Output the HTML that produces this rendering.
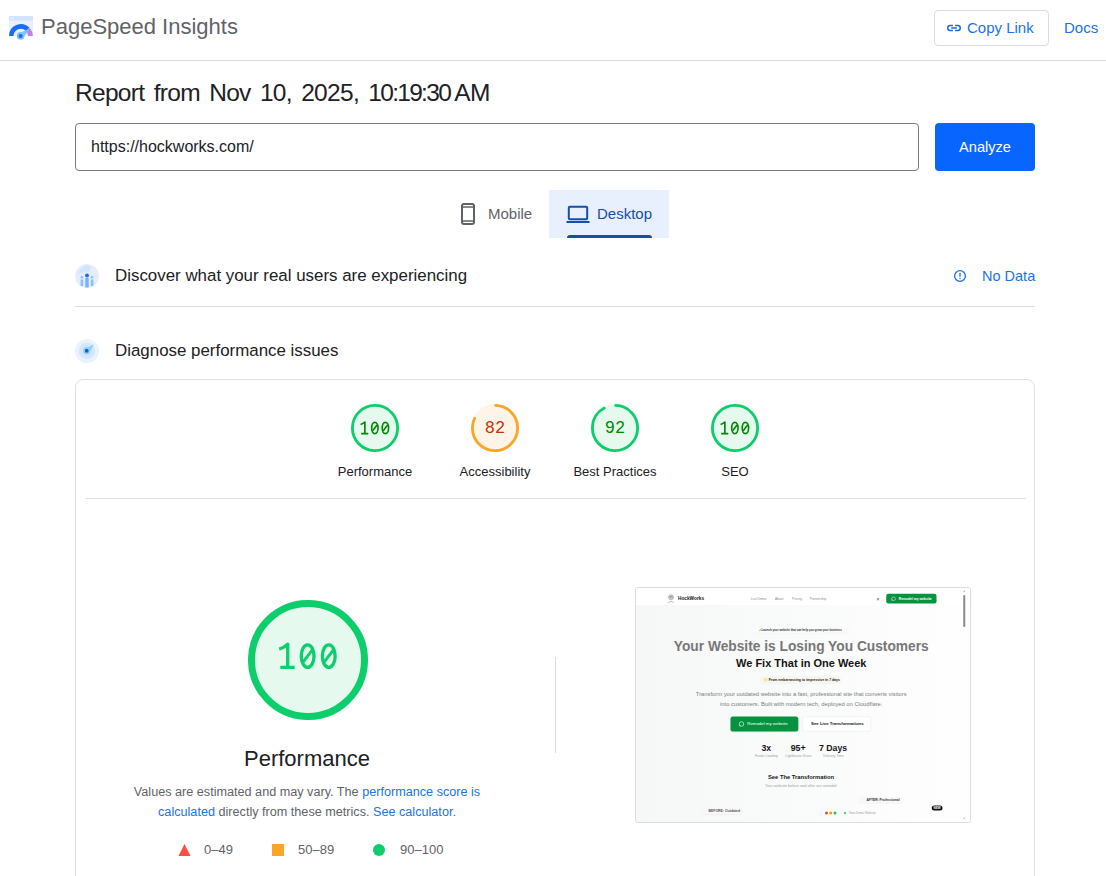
<!DOCTYPE html>
<html><head><meta charset="utf-8">
<style>
*{box-sizing:border-box;margin:0;padding:0}
html,body{width:1106px;height:876px;overflow:hidden;background:#fff;font-family:"Liberation Sans",sans-serif;color:#202124}
.abs{position:absolute}
#hdr{position:absolute;left:0;top:0;width:1106px;height:61px;border-bottom:1px solid #dadce0}
#title{left:41px;top:14px;font-size:22px;color:#5f6368;white-space:nowrap}
#copy{left:934px;top:10px;width:115px;height:36px;border:1px solid #dadce0;border-radius:4px}
#copytxt{left:967px;top:19px;font-size:15px;color:#1a73e8;white-space:nowrap}
#docs{left:1064px;top:19px;font-size:15px;color:#1a73e8}
#report{left:75px;top:79px;font-size:24.5px;letter-spacing:-0.7px;word-spacing:3.2px;color:#202124;white-space:nowrap}
#url{left:75px;top:123px;width:844px;height:48px;border:1px solid #7a7a7a;border-radius:4px}
#urltxt{left:91px;top:138px;font-size:16px;color:#202124;white-space:nowrap}
#analyze{left:935px;top:123px;width:100px;height:48px;background:#0866fe;border-radius:4px;color:#fff;font-size:14.6px;text-align:center;line-height:49px}
#desktop{left:549px;top:190px;width:120px;height:48px;background:#e8f0fe}
.tabtxt{font-size:15px;white-space:nowrap}
#sep1{left:75px;top:306px;width:960px;height:1px;background:#dadce0}
.sect{font-size:16.9px;color:#202124;white-space:nowrap}
#card{left:75px;top:379px;width:960px;height:560px;border:1px solid #e0e0e0;border-radius:8px}
#sep2{left:85px;top:498px;width:941px;height:1px;background:#e0e0e0}
.glabel{font-size:13px;color:#202124;white-space:nowrap;text-align:center;width:160px}
.gnum{font-family:"Liberation Mono",monospace;width:120px;text-align:center;white-space:nowrap;line-height:1;transform:scaleY(1.1);transform-origin:50% 50%}
#vdiv{left:555px;top:657px;width:1px;height:96px;background:#dadce0}
#shot{left:635px;top:587px;width:336px;height:236px;border:1px solid #dadce0;border-radius:3px;overflow:hidden;background:#fff}
.desc{font-size:12.65px;color:#5f6368;white-space:nowrap;line-height:20px}
.lnk{color:#1a73e8}
.leg{font-size:13px;color:#5f6368;white-space:nowrap}
#mini{position:absolute;left:0;top:0;width:1336px;height:936px;background:linear-gradient(90deg,#f6f7f7,#f9fafa 45%,#fdfdfd 80%,#fefefe);transform:scale(0.25);transform-origin:0 0;overflow:hidden}
.m{position:absolute}
.t{white-space:nowrap;line-height:1}
.c{left:0;width:1322px;text-align:center}
</style></head><body>
<div id="hdr"></div>
<!-- logo -->
<svg class="abs" style="left:8px;top:15px" width="26" height="26" viewBox="0 0 26 26">
  <rect x="0.9" y="1" width="24" height="20" rx="1.5" fill="#e8f0fe"/>
  <rect x="0.9" y="1" width="24" height="4.6" rx="1.2" fill="#d2e3fc"/>
  <circle cx="3.2" cy="3.2" r="0.65" fill="#fff"/>
  <circle cx="5.2" cy="3.2" r="0.65" fill="#fff"/>
  <path d="M3.25 21.1 A9.65 9.65 0 0 1 19.72 14.28" fill="none" stroke="#1a6cf0" stroke-width="4.6"/>
  <path d="M19.72 14.28 A9.65 9.65 0 0 1 22.55 21.1" fill="none" stroke="#c47ef0" stroke-width="4.6"/>
  <path d="M10.4 18.6 L21.8 13.4 L14.6 23.2 Z" fill="#7cc2fa"/>
  <circle cx="12.6" cy="20.9" r="3.8" fill="#7cc2fa"/>
  <circle cx="12.6" cy="20.9" r="2" fill="#1a6cf0"/>
</svg>
<div id="title" class="abs">PageSpeed Insights</div>
<div id="copy" class="abs"></div>
<svg class="abs" style="left:944px;top:20px" width="20" height="16" viewBox="944 20 20 16">
  <path d="M952.9 25.5 H950.2 A2.45 2.45 0 0 0 950.2 30.4 H952.9 M955.1 25.5 H957.8 A2.45 2.45 0 0 1 957.8 30.4 H955.1" fill="none" stroke="#1a66d6" stroke-width="1.45"/>
  <path d="M951.2 27.95 H956.8" stroke="#1a66d6" stroke-width="1.5"/>
</svg>
<div id="copytxt" class="abs">Copy Link</div>
<div id="docs" class="abs">Docs</div>

<div id="report" class="abs">Report from Nov 10, 2025, <span style="letter-spacing:-1.7px">10:19:30</span>&#8239;AM</div>
<div id="url" class="abs"></div>
<div id="urltxt" class="abs">https://hockworks.com/</div>
<div id="analyze" class="abs">Analyze</div>

<div id="desktop" class="abs"></div>
<svg class="abs" style="left:460px;top:202px" width="16" height="24" viewBox="0 0 16 24">
  <rect x="2" y="2" width="12" height="20" rx="2" fill="none" stroke="#5f6368" stroke-width="2"/>
  <path d="M3 5 H13 M3 19 H13" stroke="#5f6368" stroke-width="1.4"/>
</svg>
<div class="abs tabtxt" style="left:488px;top:205px;color:#5f6368">Mobile</div>
<svg class="abs" style="left:566px;top:205px" width="24" height="19" viewBox="0 0 24 19">
  <rect x="2.8" y="1.8" width="18.4" height="12.4" rx="1" fill="none" stroke="#174ea6" stroke-width="2"/>
  <rect x="0.5" y="16" width="23" height="2" fill="#174ea6"/>
</svg>
<div class="abs tabtxt" style="left:597px;top:205px;color:#174ea6">Desktop</div>
<div class="abs" style="left:567px;top:235px;width:85px;height:3px;background:#174ea6;border-radius:3px 3px 0 0"></div>

<!-- discover icon -->
<svg class="abs" style="left:75px;top:264px" width="24" height="24" viewBox="0 0 24 24">
  <circle cx="12" cy="12" r="12" fill="#e3edfd"/>
  <path d="M3 9 A10 10 0 0 1 16 2.5 L14 8 Z" fill="#d2e3fc"/>
  <rect x="10.3" y="14" width="3.4" height="9.4" fill="#78b2f6"/>
  <rect x="5.6" y="15.5" width="2.6" height="6.5" fill="#8ec0f8"/>
  <rect x="15.8" y="15.5" width="2.6" height="6.5" fill="#8ec0f8"/>
  <circle cx="12" cy="11.6" r="2" fill="#1a6cf0"/>
  <circle cx="6.9" cy="13.3" r="1.3" fill="#8ec0f8"/>
  <circle cx="17.1" cy="13.3" r="1.3" fill="#8ec0f8"/>
</svg>
<div class="abs sect" style="left:115px;top:266px">Discover what your real users are experiencing</div>
<svg class="abs" style="left:953px;top:269px" width="14" height="14" viewBox="0 0 14 14">
  <circle cx="7" cy="7" r="5.4" fill="none" stroke="#1a73e8" stroke-width="1.3"/>
  <rect x="6.35" y="3.8" width="1.3" height="4" fill="#1a73e8"/>
  <rect x="6.35" y="8.8" width="1.3" height="1.3" fill="#1a73e8"/>
</svg>
<div class="abs" style="left:982px;top:268px;font-size:14.5px;color:#1a73e8">No Data</div>
<div id="sep1" class="abs"></div>
<!-- diagnose icon -->
<svg class="abs" style="left:75px;top:339px" width="24" height="24" viewBox="0 0 24 24">
  <circle cx="12" cy="12" r="12" fill="#eaf2fe"/>
  <circle cx="12" cy="12" r="8.2" fill="#d3e6fd"/>
  <path d="M9.4 10.4 L19 5.2 L13.6 14.6 Z" fill="#8ccaf9"/>
  <circle cx="11.7" cy="11.7" r="3.8" fill="#9ccff9"/>
  <circle cx="11.7" cy="11.7" r="1.95" fill="#0b63d8"/>
</svg>
<div class="abs sect" style="left:115px;top:341px">Diagnose performance issues</div>

<div id="card" class="abs"></div>

<!-- small gauges -->
<svg class="abs" style="left:351px;top:404px" width="48" height="48" viewBox="0 0 120 120">
<circle cx="60" cy="60" r="56.5" stroke-width="7" fill="#0cce6b" stroke="#0cce6b" opacity="0.1"/>
<circle cx="60" cy="60" r="56.5" stroke-width="7" fill="none" stroke="#0cce6b" stroke-linecap="round" stroke-dasharray="355.00 355.00" transform="rotate(-88.23 60 60)"/>
</svg>
<svg class="abs" style="left:335.3px;top:408.05px" width="80" height="40" viewBox="-40 -20 80 40"><g transform="scale(0.5)" fill="none" stroke="#008800" stroke-width="3.3" stroke-linejoin="round">
<path d="M-28.75 -6.9 Q-23.45 -8.5 -20.25 -11.9 V11.3 M-27.65 11.3 H-13.35"/>
<ellipse cx="-0.3" cy="0" rx="6.4" ry="11.3"/><path d="M-4.75 5.7 L4.15 -5.9"/>
<ellipse cx="20.8" cy="0" rx="6.4" ry="11.3"/><path d="M16.35 5.7 L25.25 -5.9"/>
</g></svg>

<svg class="abs" style="left:471px;top:404px" width="48" height="48" viewBox="0 0 120 120">
<circle cx="60" cy="60" r="56.5" stroke-width="7" fill="#f9a528" stroke="#f9a528" opacity="0.1"/>
<circle cx="60" cy="60" r="56.5" stroke-width="7" fill="none" stroke="#f9a528" stroke-linecap="round" stroke-dasharray="287.60 355.00" transform="rotate(-88.23 60 60)"/>
</svg>
<div class="abs gnum" style="left:435px;top:420px;font-size:17px;color:#c33300">82</div>

<svg class="abs" style="left:591px;top:404px" width="48" height="48" viewBox="0 0 120 120">
<circle cx="60" cy="60" r="56.5" stroke-width="7" fill="#0cce6b" stroke="#0cce6b" opacity="0.1"/>
<circle cx="60" cy="60" r="56.5" stroke-width="7" fill="none" stroke="#0cce6b" stroke-linecap="round" stroke-dasharray="323.10 355.00" transform="rotate(-88.23 60 60)"/>
</svg>
<div class="abs gnum" style="left:555px;top:420px;font-size:17px;color:#008800">92</div>

<svg class="abs" style="left:711px;top:404px" width="48" height="48" viewBox="0 0 120 120">
<circle cx="60" cy="60" r="56.5" stroke-width="7" fill="#0cce6b" stroke="#0cce6b" opacity="0.1"/>
<circle cx="60" cy="60" r="56.5" stroke-width="7" fill="none" stroke="#0cce6b" stroke-linecap="round" stroke-dasharray="355.00 355.00" transform="rotate(-88.23 60 60)"/>
</svg>
<svg class="abs" style="left:695.3px;top:408.05px" width="80" height="40" viewBox="-40 -20 80 40"><g transform="scale(0.5)" fill="none" stroke="#008800" stroke-width="3.3" stroke-linejoin="round">
<path d="M-28.75 -6.9 Q-23.45 -8.5 -20.25 -11.9 V11.3 M-27.65 11.3 H-13.35"/>
<ellipse cx="-0.3" cy="0" rx="6.4" ry="11.3"/><path d="M-4.75 5.7 L4.15 -5.9"/>
<ellipse cx="20.8" cy="0" rx="6.4" ry="11.3"/><path d="M16.35 5.7 L25.25 -5.9"/>
</g></svg>

<div class="abs glabel" style="left:295px;top:464px">Performance</div>
<div class="abs glabel" style="left:415px;top:464px">Accessibility</div>
<div class="abs glabel" style="left:535px;top:464px">Best Practices</div>
<div class="abs glabel" style="left:655px;top:464px">SEO</div>
<div id="sep2" class="abs"></div>

<!-- big gauge -->
<svg class="abs" style="left:247.5px;top:599.5px" width="120" height="120" viewBox="0 0 120 120">
<circle cx="60" cy="60" r="56.5" stroke-width="7" fill="#0cce6b" stroke="#0cce6b" opacity="0.1"/>
<circle cx="60" cy="60" r="56.5" stroke-width="7" fill="none" stroke="#0cce6b" stroke-linecap="round" stroke-dasharray="355.00 355.00" transform="rotate(-88.23 60 60)"/>
</svg>
<svg class="abs" style="left:270px;top:635px" width="76" height="45" viewBox="270 635 76 45">
<g fill="none" stroke="#0cce6b" stroke-width="3.3" stroke-linejoin="round">
<path d="M279.2 649.2 Q284.5 647.6 287.7 644.2 V667.4 M280.3 667.4 H294.6"/>
<ellipse cx="307.65" cy="656.1" rx="6.4" ry="11.3"/>
<path d="M303.2 661.8 L312.1 650.2" stroke-width="3"/>
<ellipse cx="328.75" cy="656.1" rx="6.4" ry="11.3"/>
<path d="M324.3 661.8 L333.2 650.2" stroke-width="3"/>
</g></svg>
<div class="abs" style="left:207px;top:746px;width:200px;text-align:center;font-size:22px;color:#202124;white-space:nowrap">Performance</div>
<div class="abs desc" style="left:107px;top:782px;width:400px;text-align:center">Values are estimated and may vary. The <span class="lnk">performance score is</span></div>
<div class="abs desc" style="left:107px;top:802px;width:400px;text-align:center"><span class="lnk">calculated</span> directly from these metrics. <span class="lnk">See calculator.</span></div>
<svg class="abs" style="left:178px;top:843px" width="13" height="14" viewBox="0 0 13 14"><path d="M6.5 1 L12.5 13 H0.5 Z" fill="#ff4e42"/></svg>
<div class="abs leg" style="left:204px;top:842px">0–49</div>
<div class="abs" style="left:272px;top:844px;width:12px;height:12px;background:#f9a528"></div>
<div class="abs leg" style="left:298px;top:842px">50–89</div>
<div class="abs" style="left:373px;top:844px;width:12px;height:12px;border-radius:50%;background:#0cce6b"></div>
<div class="abs leg" style="left:400px;top:842px">90–100</div>

<div id="vdiv" class="abs"></div>
<div id="shot" class="abs"><div id="mini">
<div class="m" style="left:0;top:0;width:1336px;height:68px;background:#fff"></div>
<svg class="m" style="left:124px;top:22px" width="32" height="40" viewBox="0 0 32 40">
 <circle cx="16" cy="15" r="10" fill="#d9d9d9" stroke="#9a9a9a" stroke-width="2.5"/>
 <path d="M9 14 Q16 8 23 14" fill="none" stroke="#777" stroke-width="2.5"/>
 <circle cx="12.5" cy="17" r="1.8" fill="#666"/><circle cx="19.5" cy="17" r="1.8" fill="#666"/>
 <path d="M4 38 Q16 24 28 38" fill="none" stroke="#aaa" stroke-width="3"/>
</svg>
<div class="m t" style="left:168px;top:33px;font-size:19px;font-weight:bold;color:#151515">HockWorks</div>
<div class="m t" style="left:459px;top:36px;font-size:13px;color:#8c8c8c">Live Demo</div>
<div class="m t" style="left:556px;top:36px;font-size:13px;color:#8c8c8c">About</div>
<div class="m t" style="left:624px;top:36px;font-size:13px;color:#8c8c8c">Pricing</div>
<div class="m t" style="left:695px;top:36px;font-size:13px;color:#8c8c8c">Partnership</div>
<div class="m t" style="left:962px;top:33px;font-size:20px;color:#444">&#215;</div>
<div class="m" style="left:1001px;top:23px;width:201px;height:39px;background:#05933f;border-radius:8px"></div>
<svg class="m" style="left:1020px;top:33px" width="20" height="20" viewBox="0 0 20 20"><circle cx="10" cy="10" r="7.5" fill="none" stroke="#fff" stroke-width="2"/><path d="M3 18 L4.5 13" stroke="#fff" stroke-width="2"/></svg>
<div class="m t" style="left:1051px;top:36px;font-size:13.3px;font-weight:bold;color:#fff">Remodel my website</div>
<div class="m" style="left:1309px;top:28px;width:8px;height:128px;background:#8a8a8a;border-radius:4px"></div>
<div class="m" style="left:1310px;top:10px;width:6px;height:6px;background:#aaa;border-radius:3px"></div>
<div class="m" style="left:1310px;top:918px;width:6px;height:5px;background:#aaa;border-radius:3px"></div>

<div class="m" style="left:474px;top:154px;width:376px;height:28px;background:#fafafa;border-radius:14px;box-shadow:0 1px 4px rgba(0,0,0,0.06)"></div>
<div class="m t" style="left:490px;top:161px;font-size:11.4px;font-weight:bold;color:#333">&#10003; Launch your website that can help you grow your business</div>

<div class="m t c" style="top:205px;font-size:55px;font-weight:bold;color:#777">Your Website is Losing You Customers</div>
<div class="m t c" style="top:279px;font-size:44px;font-weight:bold;color:#141414">We Fix That in One Week</div>

<div class="m" style="left:497px;top:352px;width:321px;height:30px;background:#f6f6ee;border-radius:15px;box-shadow:0 1px 4px rgba(0,0,0,0.05)"></div>
<div class="m" style="left:510px;top:359px;width:16px;height:16px;background:#f5e6a0;border-radius:50%"></div>
<div class="m t" style="left:531px;top:361px;font-size:13.8px;font-weight:bold;color:#222">From embarrassing to impressive in 7 days</div>

<div class="m t c" style="top:413px;font-size:23.2px;color:#7c7c7c">Transform your outdated website into a fast, professional site that converts visitors</div>
<div class="m t c" style="top:452px;font-size:23.2px;color:#7c7c7c">into customers. Built with modern tech, deployed on Cloudflare.</div>

<div class="m" style="left:378px;top:514px;width:271px;height:60px;background:#05933f;border-radius:10px;box-shadow:0 2px 6px rgba(0,0,0,0.1)"></div>
<svg class="m" style="left:410px;top:532px" width="24" height="24" viewBox="0 0 24 24"><circle cx="12" cy="12" r="9" fill="none" stroke="#fff" stroke-width="2.4"/><path d="M3.5 21.5 L5.5 16" stroke="#fff" stroke-width="2.4"/></svg>
<div class="m t" style="left:445px;top:535px;font-size:17.4px;color:#fff">Remodel my website</div>
<div class="m" style="left:666px;top:514px;width:274px;height:60px;background:#fff;border:2px solid #e6e6e6;border-radius:10px"></div>
<div class="m t" style="left:700px;top:535px;font-size:17.3px;font-weight:bold;color:#161616">See Live Transformations</div>

<div class="m t" style="left:502px;top:622px;font-size:35px;font-weight:bold;color:#161616">3x</div>
<div class="m t" style="left:619px;top:622px;font-size:35px;font-weight:bold;color:#161616">95+</div>
<div class="m t" style="left:732px;top:622px;font-size:35px;font-weight:bold;color:#161616">7 Days</div>
<div class="m t" style="left:476px;top:664px;font-size:13.6px;color:#a0a0a0">Faster Loading</div>
<div class="m t" style="left:597px;top:664px;font-size:13.6px;color:#a0a0a0">Lighthouse Score</div>
<div class="m t" style="left:749px;top:664px;font-size:13.6px;color:#a0a0a0">Delivery Time</div>

<div class="m t" style="left:528px;top:745px;font-size:23.2px;font-weight:bold;color:#161616">See The Transformation</div>
<div class="m t" style="left:516px;top:783px;font-size:15.4px;color:#a0a0a0">Your website before and after our remodel</div>

<div class="m" style="left:892px;top:837px;width:174px;height:23px;background:#f8f8f8;border-radius:6px;box-shadow:0 1px 4px rgba(0,0,0,0.08)"></div>
<div class="m t" style="left:922px;top:842px;font-size:13.3px;font-weight:bold;color:#333">AFTER: Professional</div>
<div class="m" style="left:263px;top:881px;width:162px;height:24px;background:#f8f8f8;border-radius:6px;box-shadow:0 1px 4px rgba(0,0,0,0.08)"></div>
<div class="m t" style="left:290px;top:886px;font-size:13.8px;font-weight:bold;color:#555">BEFORE: Outdated</div>
<div class="m" style="left:756px;top:894px;width:12px;height:12px;background:#ef4444;border-radius:50%"></div>
<div class="m" style="left:773px;top:894px;width:12px;height:12px;background:#f59e0b;border-radius:50%"></div>
<div class="m" style="left:790px;top:894px;width:12px;height:12px;background:#22c55e;border-radius:50%"></div>
<div class="m" style="left:832px;top:896px;width:8px;height:8px;background:#22c55e;border-radius:50%"></div>
<div class="m t" style="left:851px;top:894px;font-size:12px;color:#a0a0a0">View Demo Website</div>
<div class="m" style="left:1183px;top:870px;width:43px;height:20px;background:#111;border-radius:10px"></div>
<div class="m t" style="left:1190px;top:874px;font-size:12px;font-weight:bold;color:#fff">NEW</div>
</div></div>
</body></html>
